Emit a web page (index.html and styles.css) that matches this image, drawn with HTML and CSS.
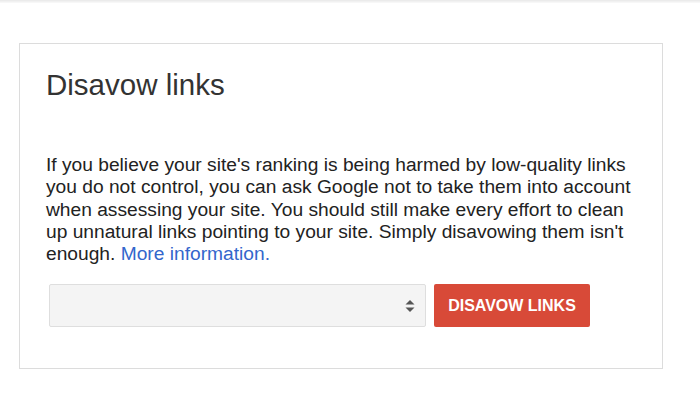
FILE: index.html
```html
<!DOCTYPE html>
<html>
  <head>
    <meta charset="utf-8">
    <title>Disavow links</title>
    <link rel="stylesheet" href="styles.css">
  </head>
  <body>
    <div class="topbar"></div>
    <div class="card">
      <h1 class="title">Disavow links</h1>
      <p class="desc">
        If you believe your site's ranking is being harmed by low-quality links
        you do not control, you can ask Google not to take them into account
        when assessing your site. You should still make every effort to clean
        up unnatural links pointing to your site. Simply disavowing them isn't
        enough. <a href="#" class="more">More information.</a>
      </p>
      <div class="actions">
        <div class="select">
          <svg class="arrows" width="10" height="14" viewBox="0 0 10 14">
            <path d="M5 1 L9.5 5.5 L0.5 5.5 Z" fill="#555"/>
            <path d="M5 13 L9.5 8.5 L0.5 8.5 Z" fill="#555"/>
          </svg>
        </div>
        <button class="btn">DISAVOW LINKS</button>
      </div>
    </div>
  </body>
</html>
```

FILE: styles.css
```css
html, body {
  margin: 0;
  padding: 0;
  background: #fff;
  font-family: "Liberation Sans", Arial, sans-serif;
  color: #222;
}

.topbar {
  height: 3px;
  background: linear-gradient(#e8e8e8, #fafafa);
}

.card {
  margin: 40px 0 0 19px;
  width: 644px;
  height: 326px;
  box-sizing: border-box;
  border: 1px solid #dcdcdc;
  padding: 0 26px;
}

.title {
  margin: 25px 0 0 0;
  font-size: 29.5px;
  font-weight: normal;
  line-height: 32px;
  color: #333;
}

.desc {
  margin: 53px 0 0 0;
  font-size: 19.2px;
  line-height: 22.3px;
  color: #222;
}

.more {
  color: #3366cc;
  text-decoration: none;
}

.actions {
  display: flex;
  gap: 8px;
  margin-top: 19px;
  padding-left: 3px;
}

.select {
  width: 377px;
  height: 43px;
  box-sizing: border-box;
  border: 1px solid #dedede;
  border-radius: 2px;
  background: #f4f4f4;
  display: flex;
  align-items: center;
  justify-content: flex-end;
  padding-right: 10px;
}

.btn {
  width: 156px;
  height: 43px;
  border: none;
  border-radius: 2px;
  background: #d84a38;
  color: #fff;
  font-family: "Liberation Sans", Arial, sans-serif;
  font-weight: bold;
  font-size: 16px;
  padding: 0;
}
```
